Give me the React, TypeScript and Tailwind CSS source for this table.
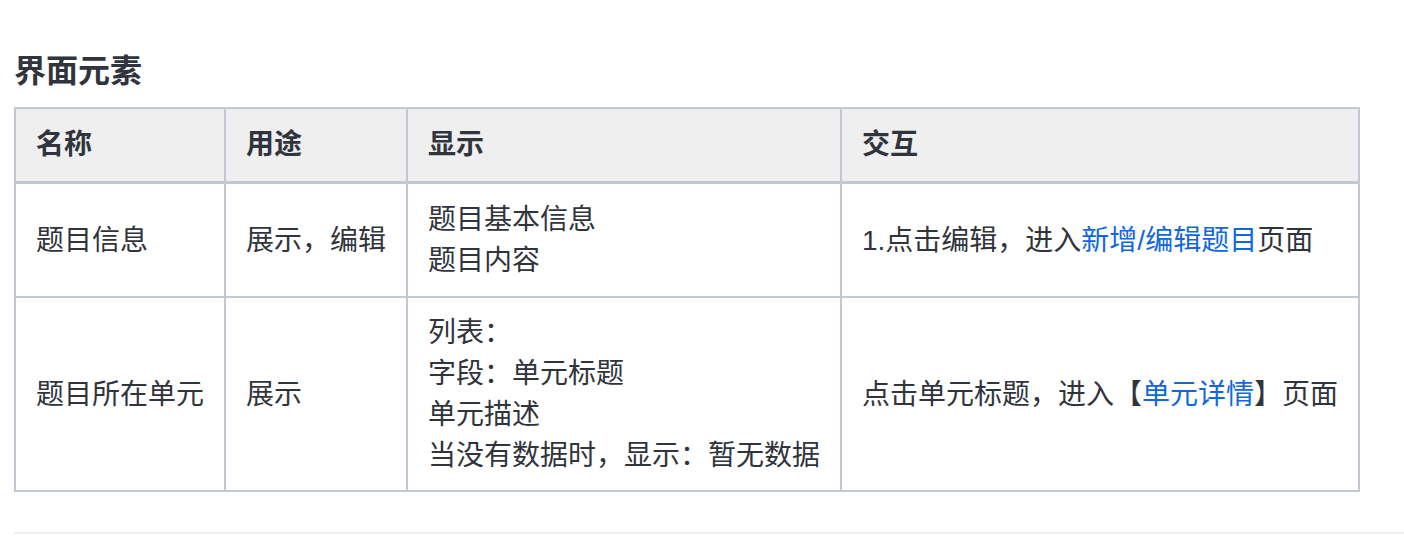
import React from 'react';

interface Row {
  name: string;
  usage: string;
  display: string[];
  action: React.ReactNode;
  pad: string;
}

const link = 'text-[#1067e0]';

const rows: Row[] = [
  {
    name: '题目信息',
    usage: '展示，编辑',
    display: ['题目基本信息', '题目内容'],
    action: (
      <>
        1.点击编辑，进入<span className={link}>新增/编辑题目</span>页面
      </>
    ),
    pad: 'py-[15px]',
  },
  {
    name: '题目所在单元',
    usage: '展示',
    display: ['列表：', '字段：单元标题', '单元描述', '当没有数据时，显示：暂无数据'],
    action: (
      <>
        点击单元标题，进入【<span className={link}>单元详情</span>】页面
      </>
    ),
    pad: 'py-[14px]',
  },
];

const headers = ['名称', '用途', '显示', '交互'];
const widths = ['w-[210px]', 'w-[182px]', 'w-[434px]', 'w-[520px]'];

const App: React.FC = () => {
  return (
    <div
      className="min-h-screen bg-white pl-[14px] pt-[47px] text-[#30343c]"
      style={{ fontFamily: '"Liberation Sans", "Noto Sans CJK SC", sans-serif' }}
    >
      <h2 className="text-[32px] font-bold leading-[48px]">界面元素</h2>

      <table className="mt-[12px] w-[1346px] table-fixed border-separate border-spacing-0 text-[28px]">
        <colgroup>
          {widths.map((w) => (
            <col key={w} className={w} />
          ))}
        </colgroup>
        <thead>
          <tr className="bg-[#efefef]">
            {headers.map((h, i) => (
              <th
                key={h}
                className={`border-t-2 border-b-[3px] border-l-2 border-[#c3c9d4] px-[20px] py-[15px] text-left align-middle font-bold leading-[42px] ${
                  i === headers.length - 1 ? 'border-r-2' : ''
                }`}
              >
                {h}
              </th>
            ))}
          </tr>
        </thead>
        <tbody>
          {rows.map((r) => (
            <tr key={r.name}>
              <td className={`border-b-2 border-l-2 border-[#c3c9d4] px-[20px] align-middle leading-[41px] ${r.pad}`}>{r.name}</td>
              <td className={`border-b-2 border-l-2 border-[#c3c9d4] px-[20px] align-middle leading-[41px] ${r.pad}`}>{r.usage}</td>
              <td className={`border-b-2 border-l-2 border-[#c3c9d4] px-[20px] align-middle leading-[41px] ${r.pad}`}>
                {r.display.map((d) => (
                  <div key={d}>{d}</div>
                ))}
              </td>
              <td
                className={`whitespace-nowrap border-b-2 border-l-2 border-r-2 border-[#c3c9d4] px-[20px] align-middle leading-[41px] ${r.pad}`}
              >
                {r.action}
              </td>
            </tr>
          ))}
        </tbody>
      </table>

      <div className="mt-[40px] h-[2px] w-full bg-[#eeeeee]" />
    </div>
  );
};

export default App;
